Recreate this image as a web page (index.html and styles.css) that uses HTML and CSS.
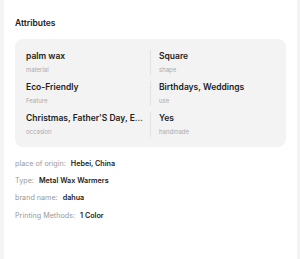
FILE: index.html
```html
<!DOCTYPE html>
<html>
<head>
<meta charset="utf-8">
<link rel="stylesheet" href="styles.css">
</head>
<body>
<div class="page">
  <div class="card">
    <h2 class="title">Attributes</h2>
    <div class="attr-box">
      <div class="cell left">
        <div class="val">palm wax</div>
        <div class="key">material</div>
      </div>
      <div class="cell right">
        <div class="val">Square</div>
        <div class="key">shape</div>
      </div>
      <div class="cell left">
        <div class="val">Eco-Friendly</div>
        <div class="key">Feature</div>
      </div>
      <div class="cell right">
        <div class="val">Birthdays, Weddings</div>
        <div class="key">use</div>
      </div>
      <div class="cell left">
        <div class="val">Christmas, Father'S Day, Easter, Valentine's Day</div>
        <div class="key">occasion</div>
      </div>
      <div class="cell right">
        <div class="val">Yes</div>
        <div class="key">handmade</div>
      </div>
    </div>
    <div class="props">
      <div class="prop"><span class="pk">place of origin:</span><span class="pv">Hebei, China</span></div>
      <div class="prop"><span class="pk">Type:</span><span class="pv">Metal Wax Warmers</span></div>
      <div class="prop"><span class="pk">brand name:</span><span class="pv">dahua</span></div>
      <div class="prop"><span class="pk">Printing Methods:</span><span class="pv">1 Color</span></div>
    </div>
  </div>
</div>
</body>
</html>
```
FILE: styles.css
```css
html, body {
  margin: 0;
  padding: 0;
  background: #f4f4f4;
  font-family: Inter, "Noto Sans", sans-serif;
}
.page {
  display: flex;
  padding: 0 3px 0 4px;
  height: 259px;
}
.card {
  flex: 1;
  background: #ffffff;
  padding: 17px 11px 0 11px;
}
.title {
  margin: 0;
  font-size: 8.5px;
  font-weight: 600;
  color: #222;
  line-height: 12px;
}
.attr-box {
  margin-top: 10px;
  background: #f3f3f3;
  border-radius: 8px;
  display: grid;
  grid-template-columns: 124px 1fr;
  padding: 11px 0 10px 11px;
  row-gap: 6px;
}
.cell {
  min-width: 0;
}
.cell.right {
  border-left: 1px solid #e2e2e2;
  padding-left: 8px;
}
.cell.left {
  padding-right: 4px;
}
.val {
  font-size: 8.5px;
  font-weight: 600;
  color: #222;
  line-height: 13px;
  white-space: nowrap;
  overflow: hidden;
  text-overflow: ellipsis;
}
.key {
  font-size: 6px;
  color: #aaa;
  line-height: 11px;
  margin-top: 1px;
}
.props {
  padding-top: 8px;
}
.prop {
  font-size: 7.2px;
  line-height: 17.2px;
  white-space: nowrap;
}
.pk {
  color: #999;
  margin-right: 5px;
}
.pv {
  color: #222;
  font-weight: 600;
}
```
